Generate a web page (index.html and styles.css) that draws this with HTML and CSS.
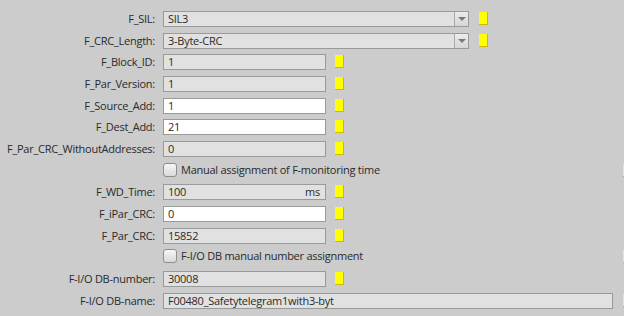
FILE: index.html
```html
<!DOCTYPE html>
<html>
<head>
<meta charset="utf-8">
<link rel="stylesheet" href="styles.css">
</head>
<body>
<div class="form">
  <div class="row"><span class="lbl">F_SIL:</span><div class="field wide select"><span class="val">SIL3</span><span class="btn"><span class="tri"></span></span></div><span class="mark gap10"></span></div>
  <div class="row"><span class="lbl">F_CRC_Length:</span><div class="field wide select"><span class="val">3-Byte-CRC</span><span class="btn"><span class="tri"></span></span></div><span class="mark gap10"></span></div>
  <div class="row"><span class="lbl">F_Block_ID:</span><div class="field short ro"><span class="val">1</span></div><span class="mark"></span></div>
  <div class="row"><span class="lbl">F_Par_Version:</span><div class="field short ro"><span class="val">1</span></div><span class="mark"></span></div>
  <div class="row"><span class="lbl">F_Source_Add:</span><div class="field short edit"><span class="val">1</span></div><span class="mark"></span></div>
  <div class="row"><span class="lbl">F_Dest_Add:</span><div class="field short edit"><span class="val">21</span></div><span class="mark"></span></div>
  <div class="row"><span class="lbl">F_Par_CRC_WithoutAddresses:</span><div class="field short ro"><span class="val">0</span></div><span class="mark"></span></div>
  <div class="row"><span class="lbl"></span><span class="cb"></span><span class="cbtext">Manual assignment of F-monitoring time</span><span class="mark far"></span></div>
  <div class="row"><span class="lbl">F_WD_Time:</span><div class="field short ro"><span class="val">100</span><span class="unit">ms</span></div><span class="mark"></span></div>
  <div class="row"><span class="lbl">F_iPar_CRC:</span><div class="field short edit"><span class="val">0</span></div><span class="mark"></span></div>
  <div class="row"><span class="lbl">F_Par_CRC:</span><div class="field short ro"><span class="val">15852</span></div><span class="mark"></span></div>
  <div class="row"><span class="lbl"></span><span class="cb"></span><span class="cbtext">F-I/O DB manual number assignment</span><span class="mark far"></span></div>
  <div class="row"><span class="lbl">F-I/O DB-number:</span><div class="field short ro"><span class="val">30008</span></div><span class="mark"></span></div>
  <div class="row"><span class="lbl">F-I/O DB-name:</span><div class="field long ro"><span class="val">F00480_Safetytelegram1with3-byt</span></div><span class="mark far"></span></div>
</div>
</body>
</html>
```
FILE: styles.css
```css
html, body {
  margin: 0;
  padding: 0;
  background: #cccccc;
  overflow: hidden;
}
body {
  width: 624px;
  height: 316px;
  font-family: "Open Sans", "Noto Sans", sans-serif;
  font-size: 11px;
  letter-spacing: -0.25px;
  color: #2a2a2a;
}
.form {
  width: 632px;
  padding-top: 11px;
  display: flex;
  flex-direction: column;
}
.row {
  height: 21.67px;
  display: flex;
  align-items: flex-start;
}
.lbl {
  width: 155px;
  flex: none;
  text-align: right;
  line-height: 16px;
  margin-right: 8px;
  white-space: nowrap;
}
.field {
  box-sizing: border-box;
  height: 16px;
  border: 1px solid #9a9a9a;
  display: flex;
  align-items: center;
  flex: none;
  line-height: 14px;
}
.field .val {
  padding-left: 4px;
  flex: 1;
  white-space: nowrap;
  overflow: hidden;
}
.field .unit {
  padding-right: 5px;
}
.wide { width: 306px; }
.short { width: 163px; }
.long { width: 450px; }
.ro, .select { background: #e1e1e1; }
.edit { background: #ffffff; }
.select .btn {
  width: 13px;
  height: 14px;
  border-left: 1px solid #a8a8a8;
  background: linear-gradient(#ececec, #d6d6d6);
  display: flex;
  align-items: center;
  justify-content: center;
}
.tri {
  width: 0;
  height: 0;
  border-left: 4px solid transparent;
  border-right: 4px solid transparent;
  border-top: 4px solid #7a7a7a;
}
.mark {
  box-sizing: border-box;
  flex: none;
  width: 9px;
  height: 13px;
  margin-top: 1px;
  margin-left: 9px;
  background: #ffff00;
  border-right: 1px solid #d2b800;
  border-bottom: 1px solid #d2b800;
}
.mark.gap10 { margin-left: 10px; }
.mark.far { margin-left: auto; }
.cb {
  box-sizing: border-box;
  flex: none;
  width: 14px;
  height: 14px;
  border: 1px solid #8e8e8e;
  border-radius: 3px;
  background: linear-gradient(#f7f7f7, #d9d9d9);
}
.cbtext {
  margin-left: 4px;
  line-height: 14px;
  white-space: nowrap;
}
```
